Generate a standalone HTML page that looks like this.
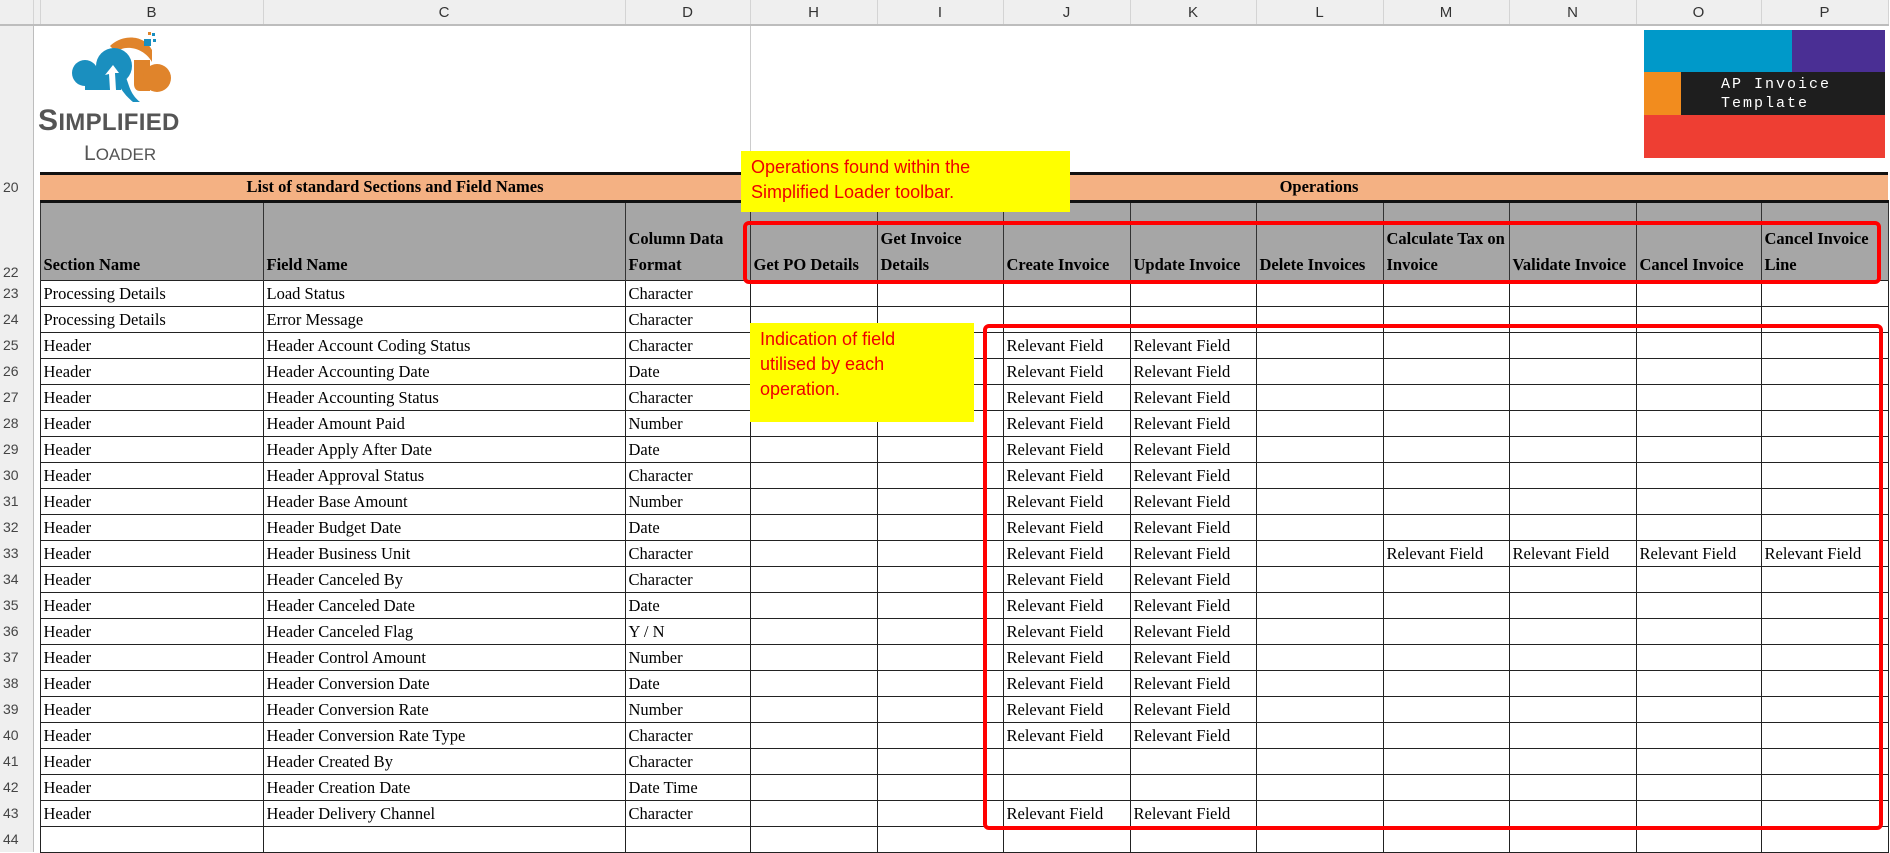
<!DOCTYPE html>
<html><head><meta charset="utf-8"><style>
body{margin:0;width:1890px;height:833px;overflow:hidden;background:#fff;font-family:"Liberation Serif",serif;position:relative}
table{border-collapse:collapse;table-layout:fixed;position:absolute;left:0;top:0}
td{padding:0 3px;font-size:16.5px;white-space:nowrap;overflow:hidden;color:#000}
.ch td{background:#efefef;height:24px;text-align:center;font-family:"Liberation Sans",sans-serif;font-size:15px;color:#333;border-right:1px solid #d4d4d4;border-bottom:2px solid #bdbdbd;padding:0}
.rn{background:#efefef;font-family:"Liberation Sans",sans-serif;font-size:14px;color:#444;text-align:left;padding-left:3px;border-right:1px solid #bdbdbd}
.d td{height:25px;line-height:25px}
.d td.c{border:1px solid #222;vertical-align:bottom;padding-top:0;padding-bottom:0}
.or{background:#f4b183;font-weight:bold;text-align:center;border-top:3px solid #111;border-bottom:3px solid #111;height:25px}
.gh td.c{background:#a6a6a6;font-weight:bold;vertical-align:bottom;border-left:1px solid #333;border-right:1px solid #333;line-height:26px;white-space:normal;padding-bottom:2px}
.ann{position:absolute;background:#ffff00;color:#e00;font-family:"Liberation Sans",sans-serif;font-size:18px;line-height:25px;padding:4px 10px;box-sizing:border-box}
.rb{position:absolute;border:4px solid #f00;border-radius:6px;box-sizing:border-box}
</style></head><body>
<table>
<colgroup><col style="width:33px"><col style="width:4px"><col style="width:223px"><col style="width:362px"><col style="width:125px"><col style="width:127px"><col style="width:126px"><col style="width:127px"><col style="width:126px"><col style="width:127px"><col style="width:126px"><col style="width:127px"><col style="width:125px"><col style="width:127px"></colgroup>
<tr class="ch"><td></td><td></td><td>B</td><td>C</td><td>D</td><td>H</td><td>I</td><td>J</td><td>K</td><td>L</td><td>M</td><td>N</td><td>O</td><td>P</td></tr>
<tr><td class="rn" style="height:147px"></td><td></td><td colspan="3"></td><td colspan="9" style="border-left:1px solid #ccc"></td></tr>
<tr><td class="rn">20</td><td></td><td colspan="3" class="or">List of standard Sections and Field Names</td><td colspan="9" class="or">Operations</td></tr>
<tr class="gh"><td class="rn" style="height:79px;vertical-align:bottom">22</td><td></td>
<td class="c">Section Name</td><td class="c">Field Name</td><td class="c">Column Data Format</td><td class="c">Get PO Details</td><td class="c">Get Invoice Details</td><td class="c">Create Invoice</td><td class="c">Update Invoice</td><td class="c">Delete Invoices</td><td class="c">Calculate Tax on Invoice</td><td class="c">Validate Invoice</td><td class="c">Cancel Invoice</td><td class="c">Cancel Invoice Line</td></tr>
<tr class="d"><td class="rn">23</td><td></td><td class="c">Processing Details</td><td class="c">Load Status</td><td class="c">Character</td><td class="c"></td><td class="c"></td><td class="c"></td><td class="c"></td><td class="c"></td><td class="c"></td><td class="c"></td><td class="c"></td><td class="c"></td></tr>
<tr class="d"><td class="rn">24</td><td></td><td class="c">Processing Details</td><td class="c">Error Message</td><td class="c">Character</td><td class="c"></td><td class="c"></td><td class="c"></td><td class="c"></td><td class="c"></td><td class="c"></td><td class="c"></td><td class="c"></td><td class="c"></td></tr>
<tr class="d"><td class="rn">25</td><td></td><td class="c">Header</td><td class="c">Header Account Coding Status</td><td class="c">Character</td><td class="c"></td><td class="c"></td><td class="c">Relevant Field</td><td class="c">Relevant Field</td><td class="c"></td><td class="c"></td><td class="c"></td><td class="c"></td><td class="c"></td></tr>
<tr class="d"><td class="rn">26</td><td></td><td class="c">Header</td><td class="c">Header Accounting Date</td><td class="c">Date</td><td class="c"></td><td class="c"></td><td class="c">Relevant Field</td><td class="c">Relevant Field</td><td class="c"></td><td class="c"></td><td class="c"></td><td class="c"></td><td class="c"></td></tr>
<tr class="d"><td class="rn">27</td><td></td><td class="c">Header</td><td class="c">Header Accounting Status</td><td class="c">Character</td><td class="c"></td><td class="c"></td><td class="c">Relevant Field</td><td class="c">Relevant Field</td><td class="c"></td><td class="c"></td><td class="c"></td><td class="c"></td><td class="c"></td></tr>
<tr class="d"><td class="rn">28</td><td></td><td class="c">Header</td><td class="c">Header Amount Paid</td><td class="c">Number</td><td class="c"></td><td class="c"></td><td class="c">Relevant Field</td><td class="c">Relevant Field</td><td class="c"></td><td class="c"></td><td class="c"></td><td class="c"></td><td class="c"></td></tr>
<tr class="d"><td class="rn">29</td><td></td><td class="c">Header</td><td class="c">Header Apply After Date</td><td class="c">Date</td><td class="c"></td><td class="c"></td><td class="c">Relevant Field</td><td class="c">Relevant Field</td><td class="c"></td><td class="c"></td><td class="c"></td><td class="c"></td><td class="c"></td></tr>
<tr class="d"><td class="rn">30</td><td></td><td class="c">Header</td><td class="c">Header Approval Status</td><td class="c">Character</td><td class="c"></td><td class="c"></td><td class="c">Relevant Field</td><td class="c">Relevant Field</td><td class="c"></td><td class="c"></td><td class="c"></td><td class="c"></td><td class="c"></td></tr>
<tr class="d"><td class="rn">31</td><td></td><td class="c">Header</td><td class="c">Header Base Amount</td><td class="c">Number</td><td class="c"></td><td class="c"></td><td class="c">Relevant Field</td><td class="c">Relevant Field</td><td class="c"></td><td class="c"></td><td class="c"></td><td class="c"></td><td class="c"></td></tr>
<tr class="d"><td class="rn">32</td><td></td><td class="c">Header</td><td class="c">Header Budget Date</td><td class="c">Date</td><td class="c"></td><td class="c"></td><td class="c">Relevant Field</td><td class="c">Relevant Field</td><td class="c"></td><td class="c"></td><td class="c"></td><td class="c"></td><td class="c"></td></tr>
<tr class="d"><td class="rn">33</td><td></td><td class="c">Header</td><td class="c">Header Business Unit</td><td class="c">Character</td><td class="c"></td><td class="c"></td><td class="c">Relevant Field</td><td class="c">Relevant Field</td><td class="c"></td><td class="c">Relevant Field</td><td class="c">Relevant Field</td><td class="c">Relevant Field</td><td class="c">Relevant Field</td></tr>
<tr class="d"><td class="rn">34</td><td></td><td class="c">Header</td><td class="c">Header Canceled By</td><td class="c">Character</td><td class="c"></td><td class="c"></td><td class="c">Relevant Field</td><td class="c">Relevant Field</td><td class="c"></td><td class="c"></td><td class="c"></td><td class="c"></td><td class="c"></td></tr>
<tr class="d"><td class="rn">35</td><td></td><td class="c">Header</td><td class="c">Header Canceled Date</td><td class="c">Date</td><td class="c"></td><td class="c"></td><td class="c">Relevant Field</td><td class="c">Relevant Field</td><td class="c"></td><td class="c"></td><td class="c"></td><td class="c"></td><td class="c"></td></tr>
<tr class="d"><td class="rn">36</td><td></td><td class="c">Header</td><td class="c">Header Canceled Flag</td><td class="c">Y / N</td><td class="c"></td><td class="c"></td><td class="c">Relevant Field</td><td class="c">Relevant Field</td><td class="c"></td><td class="c"></td><td class="c"></td><td class="c"></td><td class="c"></td></tr>
<tr class="d"><td class="rn">37</td><td></td><td class="c">Header</td><td class="c">Header Control Amount</td><td class="c">Number</td><td class="c"></td><td class="c"></td><td class="c">Relevant Field</td><td class="c">Relevant Field</td><td class="c"></td><td class="c"></td><td class="c"></td><td class="c"></td><td class="c"></td></tr>
<tr class="d"><td class="rn">38</td><td></td><td class="c">Header</td><td class="c">Header Conversion Date</td><td class="c">Date</td><td class="c"></td><td class="c"></td><td class="c">Relevant Field</td><td class="c">Relevant Field</td><td class="c"></td><td class="c"></td><td class="c"></td><td class="c"></td><td class="c"></td></tr>
<tr class="d"><td class="rn">39</td><td></td><td class="c">Header</td><td class="c">Header Conversion Rate</td><td class="c">Number</td><td class="c"></td><td class="c"></td><td class="c">Relevant Field</td><td class="c">Relevant Field</td><td class="c"></td><td class="c"></td><td class="c"></td><td class="c"></td><td class="c"></td></tr>
<tr class="d"><td class="rn">40</td><td></td><td class="c">Header</td><td class="c">Header Conversion Rate Type</td><td class="c">Character</td><td class="c"></td><td class="c"></td><td class="c">Relevant Field</td><td class="c">Relevant Field</td><td class="c"></td><td class="c"></td><td class="c"></td><td class="c"></td><td class="c"></td></tr>
<tr class="d"><td class="rn">41</td><td></td><td class="c">Header</td><td class="c">Header Created By</td><td class="c">Character</td><td class="c"></td><td class="c"></td><td class="c"></td><td class="c"></td><td class="c"></td><td class="c"></td><td class="c"></td><td class="c"></td><td class="c"></td></tr>
<tr class="d"><td class="rn">42</td><td></td><td class="c">Header</td><td class="c">Header Creation Date</td><td class="c">Date Time</td><td class="c"></td><td class="c"></td><td class="c"></td><td class="c"></td><td class="c"></td><td class="c"></td><td class="c"></td><td class="c"></td><td class="c"></td></tr>
<tr class="d"><td class="rn">43</td><td></td><td class="c">Header</td><td class="c">Header Delivery Channel</td><td class="c">Character</td><td class="c"></td><td class="c"></td><td class="c">Relevant Field</td><td class="c">Relevant Field</td><td class="c"></td><td class="c"></td><td class="c"></td><td class="c"></td><td class="c"></td></tr>
<tr class="d"><td class="rn">44</td><td></td><td class="c"></td><td class="c"></td><td class="c"></td><td class="c"></td><td class="c"></td><td class="c"></td><td class="c"></td><td class="c"></td><td class="c"></td><td class="c"></td><td class="c"></td><td class="c"></td></tr>
</table>

<!-- Simplified Loader logo -->
<svg style="position:absolute;left:60px;top:28px" width="120" height="80" viewBox="0 0 120 80">
<path d="M50 18 C62 6 84 6 92 22 L92 34 C84 20 66 16 56 24 Z" fill="#e0842b"/>
<path d="M74 32 L90 32 L90 63 L80 63 C76 63 74 60 74 56 Z" fill="#e0842b"/>
<circle cx="97" cy="50" r="14" fill="#e0842b"/>
<circle cx="25" cy="45" r="13" fill="#1a8fbf"/>
<circle cx="54" cy="38" r="18" fill="#1a8fbf"/>
<rect x="25" y="40" width="36" height="22" fill="#1a8fbf"/>
<path d="M62 40 C70 56 68 64 80 74 L73 74 C60 63 57 54 56 44 Z" fill="#1a8fbf"/>
<path d="M50 62 L49 46 L45 47 L53 37 L59 45 L55 45 L56 62 Z" fill="#fff"/>
<rect x="84" y="11" width="7" height="7" fill="#1a8fbf"/>
<rect x="92" y="5" width="3" height="3" fill="#1a8fbf"/><rect x="93" y="11" width="3" height="3" fill="#1a8fbf"/><rect x="88" y="4" width="3" height="3" fill="#e0842b"/>
</svg>
<div style="position:absolute;left:38px;top:105px;font-family:'Liberation Sans',sans-serif;font-weight:bold;color:#555;font-size:30px;line-height:32px;letter-spacing:0.3px">S<span style="font-size:24px">IMPLIFIED</span></div>
<div style="position:absolute;left:84px;top:143px;font-family:'Liberation Sans',sans-serif;color:#555;font-size:21px;line-height:22px">L<span style="font-size:17px">OADER</span></div>

<!-- AP Invoice logo -->
<div style="position:absolute;left:1644px;top:30px;width:241px;height:128px">
<div style="position:absolute;left:0;top:0;width:148px;height:42px;background:#0099c9"></div>
<div style="position:absolute;left:148px;top:0;width:93px;height:42px;background:#4a2f94"></div>
<div style="position:absolute;left:0;top:42px;width:37px;height:43px;background:#f28c1e"></div>
<div style="position:absolute;left:37px;top:42px;width:204px;height:43px;background:#1e1e1e;color:#fff;font-family:'Liberation Mono',monospace;font-size:15px;line-height:19px;padding:3px 0 0 40px;box-sizing:border-box;letter-spacing:2px">AP Invoice<br>Template</div>
<div style="position:absolute;left:0;top:85px;width:241px;height:43px;background:#ee3e33"></div>
</div>

<div class="ann" style="left:741px;top:151px;width:329px;height:61px">Operations found within the<br>Simplified Loader toolbar.</div>
<div class="rb" style="left:743px;top:221px;width:1138px;height:63px"></div>
<div class="ann" style="left:750px;top:323px;width:224px;height:99px">Indication of field<br>utilised by each<br>operation.</div>
<div class="rb" style="left:983px;top:324px;width:900px;height:506px"></div>
</body></html>
